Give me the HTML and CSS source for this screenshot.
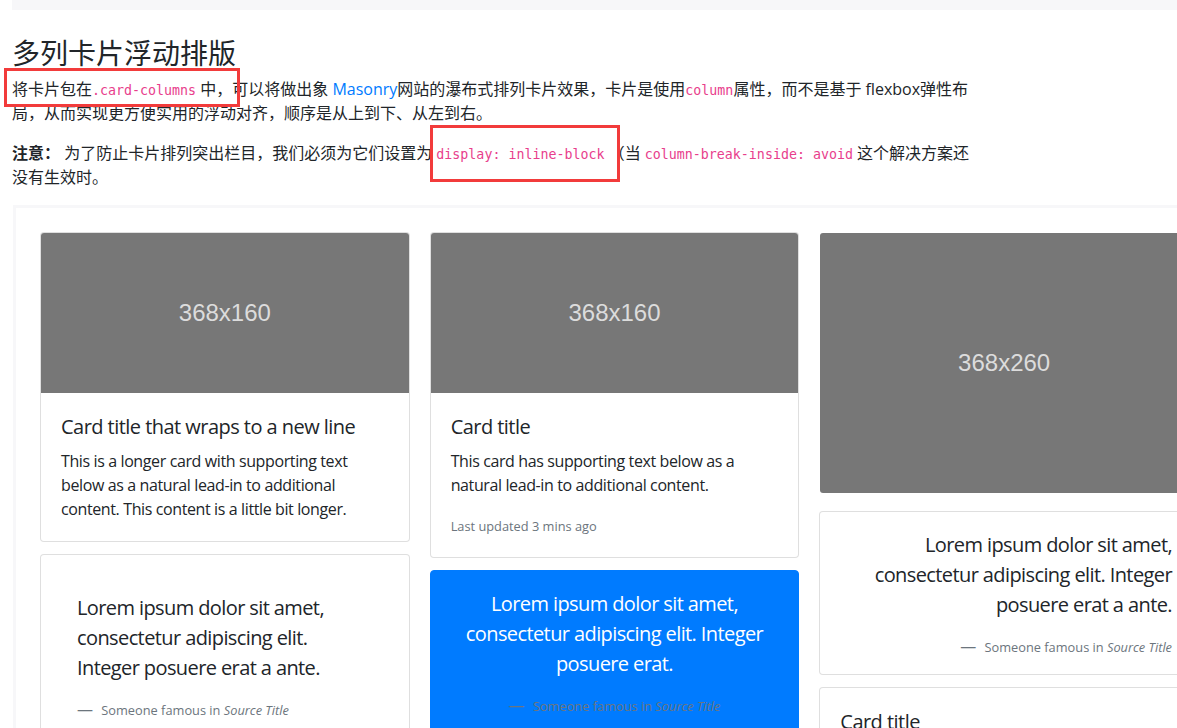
FILE: index.html
```html
<!DOCTYPE html>
<html lang="zh-CN">
<head>
<meta charset="utf-8">
<title>多列卡片浮动排版</title>
<link rel="stylesheet" href="styles.css">
</head>
<body>
<div class="page">
  <div class="highlight-tail"></div>
  <h3 class="section-title">多列卡片浮动排版</h3>
  <p class="doc-text">将卡片包在<code>.card-columns</code> 中，可以将做出象 <a class="doc-link" href="#">Masonry</a>网站的瀑布式排列卡片效果，卡片是使用<code>column</code>属性，而不是基于 flexbox弹性布局，从而实现更方便实用的浮动对齐，顺序是从上到下、从左到右。</p>
  <p class="doc-text"><strong>注意：</strong> 为了防止卡片排列突出栏目，我们必须为它们设置为 <code>display: inline-block</code> （当 <code>column-break-inside: avoid</code> 这个解决方案还没有生效时。</p>

  <div class="example">
    <div class="card-columns">
      <div class="card-col">
        <div class="card">
          <div class="ph ph-160">368x160</div>
          <div class="card-body">
            <h5 class="card-title">Card title that wraps to a new line</h5>
            <p class="card-text">This is a longer card with supporting text below as a natural lead-in to additional content. This content is a little bit longer.</p>
          </div>
        </div>
        <div class="card pad-3">
          <blockquote class="blockquote card-body">
            <p>Lorem ipsum dolor sit amet, consectetur adipiscing elit. Integer posuere erat a ante.</p>
            <footer class="blockquote-footer"><small>Someone famous in <cite>Source Title</cite></small></footer>
          </blockquote>
        </div>
      </div>

      <div class="card-col">
        <div class="card">
          <div class="ph ph-160">368x160</div>
          <div class="card-body">
            <h5 class="card-title">Card title</h5>
            <p class="card-text">This card has supporting text below as a natural lead-in to additional content.</p>
            <p class="card-text"><small class="muted">Last updated 3 mins ago</small></p>
          </div>
        </div>
        <div class="card pad-3 card-primary">
          <blockquote class="blockquote">
            <p>Lorem ipsum dolor sit amet, consectetur adipiscing elit. Integer posuere erat.</p>
            <footer class="blockquote-footer"><small>Someone famous in <cite>Source Title</cite></small></footer>
          </blockquote>
        </div>
        <div class="card text-center">
          <div class="card-body">
            <h5 class="card-title">Card title</h5>
            <p class="card-text">This card has a regular title and short paragraphy of text below it.</p>
            <p class="card-text"><small class="muted">Last updated 3 mins ago</small></p>
          </div>
        </div>
      </div>

      <div class="card-col">
        <div class="card card-image-only">
          <div class="ph ph-260">368x260</div>
        </div>
        <div class="card pad-3 text-right">
          <blockquote class="blockquote">
            <p>Lorem ipsum dolor sit amet, consectetur adipiscing elit. Integer posuere erat a ante.</p>
            <footer class="blockquote-footer"><small>Someone famous in <cite>Source Title</cite></small></footer>
          </blockquote>
        </div>
        <div class="card">
          <div class="card-body">
            <h5 class="card-title">Card title</h5>
            <p class="card-text">This is a wider card with supporting text below as a natural lead-in to additional content. This card has even longer content than the first to show that equal height action.</p>
            <p class="card-text"><small class="muted">Last updated 3 mins ago</small></p>
          </div>
        </div>
      </div>
    </div>
  </div>

  <div class="annot annot-1"></div>
  <div class="annot annot-2"></div>
</div>
</body>
</html>
```

FILE: styles.css
```css
html, body {
  margin: 0;
  padding: 0;
  overflow: hidden;
  background: #fff;
}

body {
  font-family: "Open Sans", "Noto Sans CJK SC", sans-serif;
  font-size: 16px;
  line-height: 1.5;
  color: #212529;
}

.page {
  position: relative;
  width: 1204px;
  padding-left: 12px;
}

.highlight-tail {
  height: 10px;
  background: #f7f7f9;
}

.section-title {
  font-size: 28px;
  font-weight: 400;
  line-height: 1.2;
  margin: 27px 0 6px;
}

.doc-text {
  max-width: 968px;
  margin: 0 0 16px;
}

.doc-text strong {
  font-weight: 700;
}

code {
  font-family: "DejaVu Sans Mono", "Liberation Mono", monospace;
  font-size: 13.3px;
  line-height: 1;
  color: #e83e8c;
}

.doc-link {
  color: #007bff;
  text-decoration: none;
}

.example {
  margin-left: 1px;
  border: 3px solid #f7f7f9;
  padding: 24px;
}

.card-columns {
  display: grid;
  grid-template-columns: repeat(3, 1fr);
  column-gap: 20px;
  align-items: start;
}

.card-col {
  display: flex;
  flex-direction: column;
  gap: 12px;
}

.card {
  background: #fff;
  border: 1px solid rgba(0, 0, 0, 0.125);
  border-radius: 4px;
  overflow: hidden;
}

.card-image-only {
  border-color: transparent;
  margin-bottom: 5px;
}

.ph {
  display: flex;
  align-items: center;
  justify-content: center;
  background: #777777;
  color: #dcdcdc;
  font-family: "Liberation Sans", Arial, sans-serif;
  font-size: 24px;
  letter-spacing: 0;
}

.ph-160 { height: 160px; }
.ph-260 { height: 260px; }

.card-body {
  padding: 20px;
}

.card-title {
  font-size: 20px;
  font-weight: 400;
  line-height: 1.2;
  letter-spacing: -0.027em;
  margin: 0 0 10px;
  padding-top: 2px;
}

.card-text {
  margin: 0 0 16px;
  letter-spacing: -0.024em;
}

.card-text:last-child {
  margin-bottom: 0;
}

.muted {
  font-size: 80%;
  color: #6c757d;
  letter-spacing: 0;
}

.pad-3 {
  padding: 16px;
}

.blockquote {
  margin: 0;
  font-size: 20px;
}

.blockquote p {
  margin: 0 0 14px;
  padding-top: 2px;
  letter-spacing: -0.03em;
}

.blockquote-footer {
  display: block;
  font-size: 80%;
  color: #6c757d;
}

.blockquote-footer::before {
  content: "\2014\00A0\00A0";
}

.blockquote-footer small {
  font-size: 80%;
}

.card-primary {
  background: #007bff;
  border-color: #007bff;
  color: #fff;
  text-align: center;
}

.text-center { text-align: center; }
.text-right { text-align: right; }

.annot {
  position: absolute;
  box-sizing: border-box;
  border: 3px solid #f23b3b;
}

.annot-1 {
  left: 4px;
  top: 68px;
  width: 236px;
  height: 39px;
}

.annot-2 {
  left: 430px;
  top: 125px;
  width: 190px;
  height: 57px;
}
```
